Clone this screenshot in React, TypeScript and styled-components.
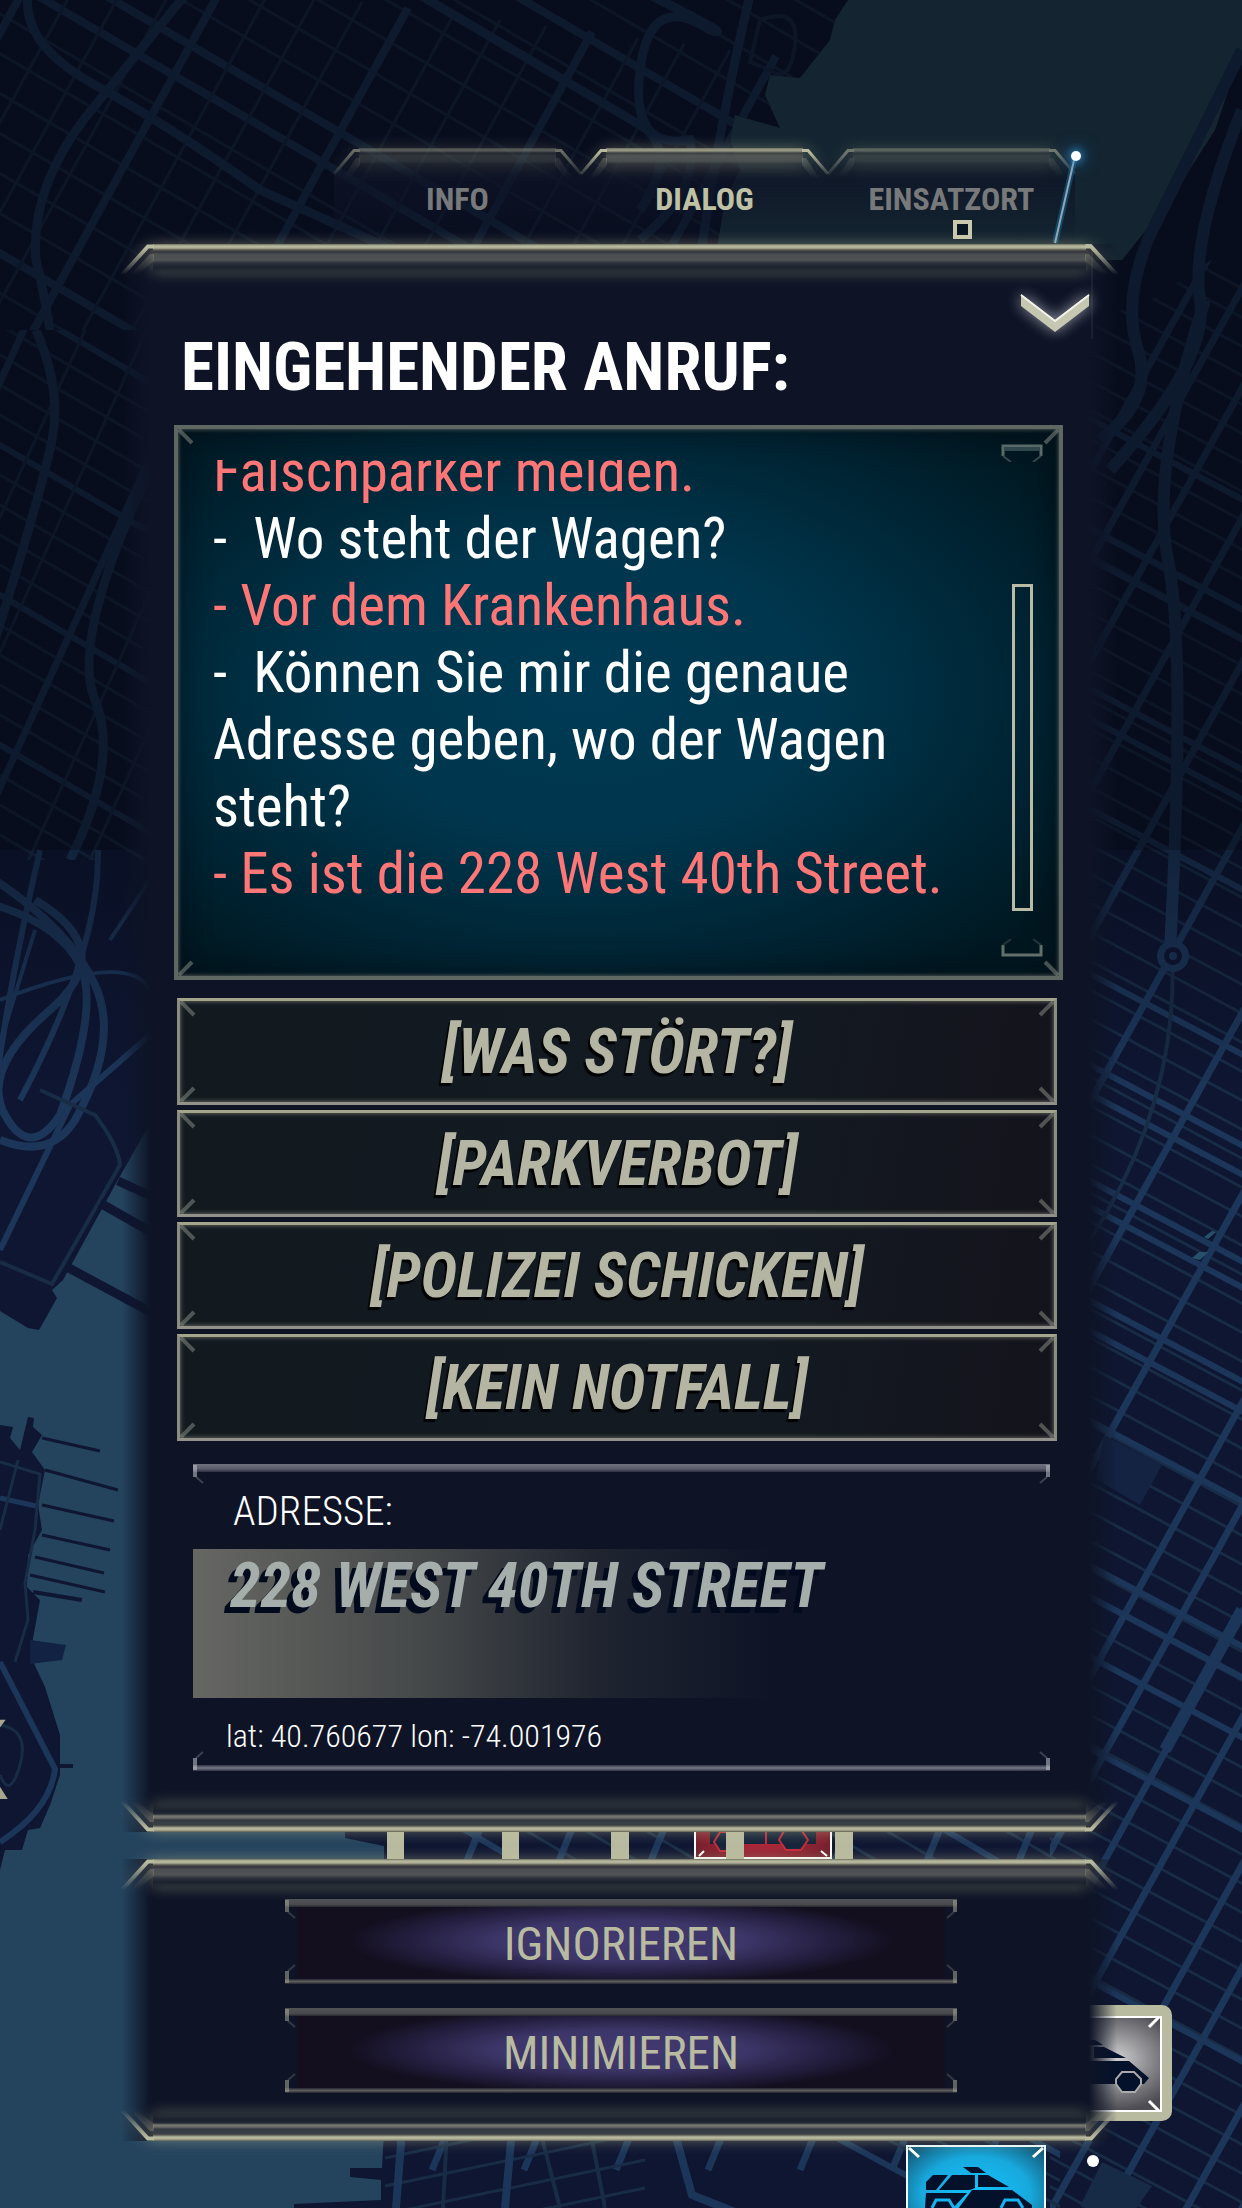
import React, { useId } from 'react';
import styled, { createGlobalStyle, css } from 'styled-components';

const ink = '#0e1426';
const cream = '#b9bba0';

const GlobalStyle = createGlobalStyle`
  *, *::before, *::after { box-sizing: border-box; }
  body {
    margin: 0;
    background: #070b1a;
    color: #fff;
    font-family: 'Roboto Condensed', Roboto, 'Liberation Sans', sans-serif;
  }
  h1, p { margin: 0; }
  button {
    font-family: inherit;
    border: 0;
    padding: 0;
    margin: 0;
    background: none;
    color: inherit;
    cursor: pointer;
  }
`;

/* ---------- City map behind the interface ---------- */

const Backdrop = styled.svg`
  position: absolute;
  inset: 0;
  width: 100%;
  height: 100%;
  z-index: -1;
`;

type Grid = { x: number; y: number; dx: number; dy: number; sx: number; sy: number; count: number; every: number };

const gridPaths = ({ x, y, dx, dy, sx, sy, count, every }: Grid) => {
  let minor = '';
  let major = '';
  for (let i = 0; i < count; i++) {
    const d = `M${x + sx * i} ${y + sy * i}l${dx} ${dy}`;
    if (every && i % every === 0) major += d;
    else minor += d;
  }
  return { minor, major };
};

function Streets({ grid, minorWidth = 3, majorWidth = 6 }: { grid: Grid; minorWidth?: number; majorWidth?: number }) {
  const { minor, major } = gridPaths(grid);
  return (
    <g fill="none">
      <path d={minor} stroke="#182c46" strokeWidth={minorWidth} />
      <path d={major} stroke="#1c3659" strokeWidth={majorWidth} />
    </g>
  );
}

/* Heights at which the eastern avenues and wide streets cross x = 1091. */
const avenues = [470, 560, 660, 790, 935, 1100, 1285, 1467, 1675, 1778, 1885, 1990, 2137, 2240, 2380, 2480];
const wideStreets = [420, 530, 560, 690, 720, 810, 975, 1066, 1095, 1182, 1208, 1302, 1332, 1422, 1567, 1598, 1658, 1750, 1982];
const avenuePath = avenues.map((y) => `M1041 ${y + 90}L1251 ${y - 288}`).join('');
const wideStreetPath = wideStreets.map((y) => `M1041 ${y - 27}L1251 ${y + 84}`).join('');

function CityMap() {
  return (
    <Backdrop viewBox="0 0 1242 2208" preserveAspectRatio="xMidYMin slice" aria-hidden="true">
      <defs>
        <linearGradient id="dusk" x1="0" y1="0" x2="0" y2="1">
          <stop offset="0" stopColor="#03060f" stopOpacity="0.58" />
          <stop offset="0.773" stopColor="#03060f" stopOpacity="0.58" />
          <stop offset="0.773" stopColor="#03060f" stopOpacity="0.4" />
          <stop offset="1" stopColor="#03060f" stopOpacity="0" />
        </linearGradient>
        <radialGradient id="pinGrey" cx="0.62" cy="0.45" r="0.55">
          <stop offset="0" stopColor="#d2d2d4" />
          <stop offset="1" stopColor="#4c4c52" />
        </radialGradient>
        <radialGradient id="pinBlue" cx="0.5" cy="0.5" r="0.65">
          <stop offset="0" stopColor="#12c2ff" />
          <stop offset="0.6" stopColor="#18a9dd" />
          <stop offset="1" stopColor="#135a78" />
        </radialGradient>
        <radialGradient id="pinRed" cx="0.5" cy="0.6" r="0.6">
          <stop offset="0" stopColor="#c42b3c" />
          <stop offset="1" stopColor="#6a1d2a" />
        </radialGradient>
        <clipPath id="east"><path d="M1060 330L1092 320L1150 300L1242 240V2208H1050V330z" /></clipPath>
        <clipPath id="southShore"><path d="M345 1820H1060V2208H294V2204L381 2200V2180L350 2177V2168L382 2168L384 2130V1846L345 1838z" /></clipPath>
        <clipPath id="north"><path d="M0 0H848L835 20L830 40L800 78L770 75L765 95L780 128L735 115L730 140L740 170L725 200L715 260H600V330H0z" /></clipPath>
        <clipPath id="west"><path d="M0 330H180V860H0z" /></clipPath>
      </defs>

      <rect width="1242" height="2208" fill="#0e1632" />
      <path d="M848 0L835 20L830 40L800 78L770 75L765 95L780 128L735 115L730 140L740 170L725 200L715 260H1122L1170 200L1215 130L1242 50V0z" fill="#2b5060" />

      <g clipPath="url(#north)">
        <Streets grid={{ x: -400, y: -300, dx: 1300, dy: 760, sx: 17, sy: -30, count: 24, every: 6 }} minorWidth={3} majorWidth={8} />
        <Streets grid={{ x: -417, y: -270, dx: 1300, dy: 760, sx: -17, sy: 30, count: 24, every: 7 }} minorWidth={3} majorWidth={8} />
        <Streets grid={{ x: 40, y: -40, dx: -330, dy: 600, sx: 46, sy: 6, count: 22, every: 4 }} minorWidth={3} majorWidth={8} />
        <g fill="none" stroke="#1c3659" strokeWidth="9">
          <path d="M28 -5Q22 45 95 85T260 190L420 262" />
          <path d="M185 -5L85 118Q30 190 36 260Q60 360 55 420" />
          <path d="M420 -5L640 125Q680 150 640 210" />
          <path d="M650 -5Q740 40 710 30Q650 -10 640 70T690 140Q700 190 640 240" />
          <path d="M750 -5Q720 120 700 260" />
        </g>
        <path d="M760 20Q800 5 795 45T770 70L750 62z" fill="none" stroke="#182c46" strokeWidth="4" />
      </g>

      <g clipPath="url(#west)">
        <Streets grid={{ x: -60, y: 260, dx: 300, dy: 175, sx: 0, sy: 30, count: 22, every: 5 }} />
        <Streets grid={{ x: 60, y: 250, dx: -300, dy: 660, sx: 46, sy: 34, count: 14, every: 3 }} majorWidth={7} />
        <path d="M36 330Q62 390 52 440T-5 640M150 470Q70 640 95 700T70 860" fill="none" stroke="#1c3659" strokeWidth="9" />
      </g>

      <g clipPath="url(#east)">
        <Streets grid={{ x: 1040, y: 180, dx: 220, dy: 118, sx: 0, sy: 29, count: 74, every: 0 }} />
        <path d={wideStreetPath} stroke="#1c3659" strokeWidth="6" />
        <path d={avenuePath} stroke="#1c3659" strokeWidth="7" />
        <path d="M1242 1610L1165 1750" stroke="#1c3659" strokeWidth="12" />
        <path d="M1205 300Q1150 470 1168 560T1170 950" fill="none" stroke="#1c3659" strokeWidth="12" />
        <path d="M1172 950Q1180 1100 1090 1240" fill="none" stroke="#182c46" strokeWidth="4" />
      </g>
      <path d="M1242 50L1150 235Q1122 300 1138 350T1100 440M1242 110Q1190 240 1200 300T1110 470" fill="none" stroke="#1c3659" strokeWidth="12" />
      <circle cx="1173" cy="956" r="16" fill="#1c3659" />
      <circle cx="1173" cy="956" r="9" fill="#0e1632" />
      <circle cx="1173" cy="956" r="4" fill="#1c3659" />
      <path d="M1192 1258l7-6h9l-8 8zM1204 1237l8-6 4 1-8 7z" fill="#28506a" />
      <path d="M1104 1435l58 30-22 40-44-26z" fill="#142342" />

      <g fill="none" stroke="#1c3659">
        <path d="M-5 905Q60 925 80 965T60 1115Q30 1160 5 1115T50 1010T35 900" strokeWidth="8" />
        <path d="M-5 880Q70 930 95 985T75 1120Q50 1160 0 1140" strokeWidth="8" />
        <path d="M40 850Q5 1000 -10 1130M150 1035L70 1105L0 1250M98 850Q100 950 20 1100" strokeWidth="6" />
        <path d="M0 1000Q130 950 150 990M35 930L-5 1060M150 880L110 940" strokeWidth="4" />
        <path d="M40 1090L95 1115Q118 1145 120 1165L52 1284L0 1262" stroke="#182c46" strokeWidth="4" />
      </g>

      <path d="M145 1132L115 1185L63 1280L52 1290L57 1298L39 1330L28 1328L0 1311V1425L13 1427L10 1438L20 1450L28 1417L34 1418L33 1427L42 1435L32 1452L45 1470L38 1505L42 1530L28 1555L27 1587L40 1600L30 1655L45 1687L60 1735V1775L50 1805L40 1828L28 1830L22 1850L5 1850L0 1870V2208H294V2204L381 2200V2180L350 2177V2168L382 2168L384 2130V1846L345 1838V1800L180 1700V1100z" fill="#24435d" />
      <g fill="none" stroke="#0e1632">
        <path d="M67 1267L160 1317M100 1203L160 1237M118 1181L160 1200" strokeWidth="9" />
        <path d="M42 1438L100 1451M45 1470L118 1490M42 1505L114 1521M42 1535L110 1550M35 1557L104 1573M30 1575L105 1592" strokeWidth="3" />
        <path d="M33 1592L82 1600M58 1766H73" strokeWidth="4" />
      </g>
      <path d="M30 1640L66 1645L62 1660L30 1664z" fill="#122242" />
      <g fill="none" stroke="#1c3659">
        <path d="M0 1662L55 1769Q50 1810 0 1842" strokeWidth="6" />
        <path d="M0 1498L36 1506" strokeWidth="5" />
        <path d="M0 1462L40 1474L35 1530L25 1583L28 1620L15 1662M18 1460L0 1530M0 1725Q30 1730 20 1765T0 1775" stroke="#182c46" strokeWidth="3" />
      </g>
      <text x="8" y="1799" textAnchor="end" fontSize="112" fill="#a5a68d">K</text>

      <g clipPath="url(#southShore)">
        <Streets grid={{ x: 380, y: 1780, dx: 340, dy: 200, sx: 60, sy: 0, count: 14, every: 4 }} />
        <Streets grid={{ x: 500, y: 1780, dx: -160, dy: 390, sx: 92, sy: 0, count: 12, every: 1 }} majorWidth={7} />
        <Streets grid={{ x: 385, y: 2158, dx: 260, dy: -54, sx: 0, sy: 28, count: 5, every: 0 }} />
        <Streets grid={{ x: 600, y: 2010, dx: 500, dy: 270, sx: 48, sy: 0, count: 12, every: 4 }} />
        <path d="M402 2130L396 2208M512 2130L505 2208M674 2130L692 2195L780 2230" fill="none" stroke="#1c3659" strokeWidth="8" />
        <path d="M447 2130L443 2208M540 2130L560 2208M590 2130L605 2208" fill="none" stroke="#182c46" strokeWidth="4" />
      </g>
      <path d="M1102 2162l50 24-28 40-44-20z" fill="#172a46" />

      <rect width="1242" height="1100" fill="url(#dusk)" />

      <g>
        <rect x="695" y="1806" width="136" height="52" fill="url(#pinRed)" stroke="#fff" strokeWidth="2" />
        <path d="M710 1830h106v14H710z" fill="#16243a" />
        <path d="M766 1830v14" stroke="#c42b3c" strokeWidth="2" />
        <path d="M720 1832h14l8 8-8 11h-14l-6-9zM784 1831h18l6 9-7 10h-15l-7-10z" fill="#16243a" stroke="#c42b3c" strokeWidth="2" />
        <path d="M699 1856l5-5M827 1856l-6-5" stroke="#fff" strokeWidth="2" />
        <g fill={cream}>
          <path d="M387 1826h17v40h-17zM502 1826h17v40h-17zM611 1826h18v40h-18zM726 1826h18v40h-18zM835 1826h18v40h-18z" />
        </g>
      </g>

      <g>
        <rect x="1030" y="2005" width="142" height="116" rx="10" fill={cream} />
        <rect x="1040" y="2017" width="121" height="94" fill="url(#pinGrey)" stroke="#fff" strokeWidth="2" />
        <path d="M1149 2027l10-10M1149 2101l10 10" stroke="#fff" strokeWidth="3" />
        <path d="M1060 2040H1095l8 5H1060zM1094 2047h10l22 11h-32zM1050 2061H1129l20 17-5 6H1050z" fill="#04112a" />
        <path d="M1122 2072h12l7 7v5l-6 8h-13l-6-8v-5z" fill="#04112a" stroke="#aaa" strokeWidth="2" />
      </g>

      <g>
        <rect x="907" y="2146" width="138" height="96" fill="url(#pinBlue)" stroke="#eefaff" strokeWidth="2" />
        <path d="M909 2148l10 9M1043 2148l-10 9" stroke="#fff" strokeWidth="3" />
        <g fill="#04112a">
          <path d="M963 2167h15l8 6H971z" />
          <path d="M933 2175h15l-12 15h-10v-8zM952 2175h23v13l-5 2h-31zM978 2175h10l21 12h-31z" />
          <path d="M926 2193h41l-14 15h-28zM972 2190h40l20 15v8h-77z" />
        </g>
        <path d="M932 2208l4-8h13l5 8M1001 2208l4-8h13l5 8" fill="#04112a" stroke="#14b4ef" strokeWidth="3" />
      </g>
      <circle cx="1093" cy="2161" r="6" fill="#fff" />
    </Backdrop>
  );
}

/* ---------- Frame parts ---------- */

type EdgeKind = 'top' | 'bottom' | 'tab';

const EdgeRow = styled.div<{ $bottom?: boolean; $dim?: boolean }>`
  display: flex;
  height: ${(p) => (p.$bottom ? 35 : 40)}px;
  opacity: ${(p) => (p.$dim ? 0.55 : 1)};
  filter: drop-shadow(0 0 7px rgba(196, 192, 150, 0.45));
`;

const EdgeLine = styled.div<{ $kind: EdgeKind }>`
  flex: 1;
  margin: 0 -1px;
  background: ${({ $kind }) =>
    $kind === 'bottom'
      ? `linear-gradient(to bottom, transparent 0 2px, #1a212d 14px, #242b34 17px, #777870 19px, #6b6c66 21px, #343a41 23px, #3a4146 28px, #5c5d55 29px, ${cream} 31px, #aeae96 33px, #5c5d55 35px)`
      : $kind === 'tab'
        ? 'linear-gradient(to bottom, rgba(150,150,125,.6) 0, #9d9f89 2px, #8f917e 3px, rgba(60,64,66,.7) 5px, rgba(84,88,86,.9) 8px, rgba(76,82,82,.9) 13px, rgba(40,44,56,.4) 16px, transparent 26px)'
        : `linear-gradient(to bottom, #6c6c5e 0, ${cream} 2px, #aeae96 4px, #55564f 6px, #30333a 8px, #4a4e51 10px, #4f5354 16px, #2c313c 19px, #1c222e 23px, transparent 32px)`};
`;

const CornerSvg = styled.svg<{ $flip: boolean; $upside: boolean }>`
  flex: none;
  display: block;
  overflow: visible;
  transform: scale(${(p) => (p.$flip ? -1 : 1)}, ${(p) => (p.$upside ? -1 : 1)});
`;

function Corner({ kind, flip = false }: { kind: EdgeKind; flip?: boolean }) {
  const id = useId();
  const width = kind === 'tab' ? 26 : 32;
  const height = kind === 'bottom' ? 35 : 40;
  const inset = kind === 'tab' ? 20 : 26;
  return (
    <CornerSvg $flip={flip} $upside={kind === 'bottom'} width={width} height={height} aria-hidden="true">
      <defs>
        <linearGradient id={id} gradientUnits="userSpaceOnUse" x1="0" y1="4" x2="0" y2="31">
          <stop offset="0" stopColor="#b9bba0" />
          <stop offset="1" stopColor="#b9bba0" stopOpacity="0" />
        </linearGradient>
      </defs>
      <path
        d={`M${width} 2.5H${inset}L0 ${kind === 'tab' ? 26 : 31}`}
        fill="none"
        stroke={`url(#${id})`}
        strokeWidth={kind === 'tab' ? 3 : 4}
      />
      <path d={`M${width} 10H${inset + 2}L9 30L15 31L${width} 17z`} fill={`url(#${id})`} opacity="0.35" />
    </CornerSvg>
  );
}

function Edge({ kind, dim }: { kind: EdgeKind; dim?: boolean }) {
  return (
    <EdgeRow $bottom={kind === 'bottom'} $dim={dim} aria-hidden="true">
      <Corner kind={kind} />
      <EdgeLine $kind={kind} />
      <Corner kind={kind} flip />
    </EdgeRow>
  );
}

type Spot = 'tl' | 'tr' | 'bl' | 'br';
const spots: Spot[] = ['tl', 'tr', 'bl', 'br'];

const CornerMark = styled.svg<{ $spot: Spot }>`
  position: absolute;
  pointer-events: none;
  ${(p) => (p.$spot[0] === 't' ? 'top: 0;' : 'bottom: 0;')}
  ${(p) => (p.$spot[1] === 'l' ? 'left: 0;' : 'right: 0;')}
  transform: scale(${(p) => (p.$spot[1] === 'l' ? 1 : -1)}, ${(p) => (p.$spot[0] === 't' ? 1 : -1)});
`;

function Ticks() {
  return (
    <>
      {spots.map((s) => (
        <CornerMark key={s} $spot={s} width="22" height="22" aria-hidden="true">
          <path d="M1 1L14 14" stroke="#8d9389" strokeWidth="4" opacity="0.5" />
        </CornerMark>
      ))}
    </>
  );
}

function Hooks({ tone = '#a3a596' }: { tone?: string }) {
  return (
    <>
      {spots.map((s) => (
        <CornerMark key={s} $spot={s} width="16" height="22" aria-hidden="true">
          <path d="M2 1V13" stroke={tone} strokeWidth="4" opacity="0.55" />
          <path d="M3 13L10 19" stroke={tone} strokeWidth="2" opacity="0.25" />
        </CornerMark>
      ))}
    </>
  );
}

/* ---------- Layout ---------- */

const Screen = styled.main`
  position: relative;
  z-index: 0;
  display: flex;
  flex-direction: column;
  min-height: 100vh;
  padding: 148px 125px 66px 122px;
  overflow: hidden;
`;

const TabBar = styled.nav`
  position: relative;
  display: grid;
  grid-template-columns: repeat(3, 1fr);
  margin: 0 42px 0 212px;
`;

const Tab = styled.button<{ $active?: boolean }>`
  display: flex;
  flex-direction: column;
  justify-content: flex-start;
  align-items: stretch;
  height: 96px;
  color: ${(p) => (p.$active ? '#bfc1a5' : '#77797a')};
  font-size: 32px;
  line-height: 38px;
  font-weight: 700;
  background: linear-gradient(to bottom, transparent 8px, rgba(14, 20, 38, 0.75) 30px, rgba(14, 20, 38, 0.1) 90px);
  span { display: block; margin-top: -8px; }
`;

const Antenna = styled.svg`
  position: absolute;
  right: -36px;
  bottom: -96px;
  overflow: visible;
  pointer-events: none;
`;

const Beacon = styled.circle`
  filter: drop-shadow(0 0 5px #3ba7f0) drop-shadow(0 0 8px #1d6fb0);
`;

const Panel = styled.section`
  background: linear-gradient(to right, transparent, ${ink} 28px, ${ink} calc(100% - 28px), transparent);
  & + & { margin-top: 27px; }
`;

const PanelHeader = styled.header`
  display: flex;
  justify-content: space-between;
  align-items: flex-start;
  padding: 10px 28px 19px 59px;
`;

const Title = styled.h1`
  margin-top: 34px;
  font-size: 67px;
  line-height: 78px;
  font-weight: 700;
`;

const CollapseButton = styled.button`
  display: block;
  svg { display: block; overflow: visible; filter: drop-shadow(0 0 7px rgba(220, 220, 230, 0.7)); }
`;

const PanelBody = styled.div`
  padding: 0 54px 26px 52px;
`;

const Call = styled.div`
  position: relative;
  display: flex;
  justify-content: space-between;
  border: 4px solid #5f6763;
  background: radial-gradient(ellipse 68% 66% at 46% 48%, #003a54 0%, #00364d 40%, #002433 75%, #001720 100%);
  box-shadow: inset 0 0 4px #6c716c, inset 0 0 30px rgba(0, 10, 16, 0.6);
`;

const Transcript = styled.div`
  display: flex;
  flex: 1;
  flex-direction: column;
  justify-content: flex-end;
  height: 447px;
  margin: 31px 24px 69px 35px;
  overflow: hidden;
  font-size: 57px;
  line-height: 67px;
  white-space: pre-wrap;
`;

const Line = styled.p<{ $caller?: boolean }>`
  flex: none;
  color: ${(p) => (p.$caller ? '#ff7676' : '#fff')};
`;

const Scroller = styled.div`
  display: flex;
  flex-direction: column;
  align-items: center;
  width: 42px;
  margin: 15px 16px 19px 0;
  svg { display: block; }
`;

const ScrollTrack = styled.div`
  flex: 1;
  display: flex;
  padding: 122px 0 28px;
`;

const ScrollThumb = styled.div`
  width: 21px;
  border: 3px solid #b9bba4;
`;

const Choices = styled.div`
  display: grid;
  gap: 5px;
  margin: 18px 6px 0 3px;
`;

const Choice = styled.button`
  position: relative;
  height: 107px;
  border: 3px solid;
  border-color: #a3a48c #8b8d80 #92928a #8b8d80;
  background: linear-gradient(100deg, #121a20, #131a22 65%, #14131c);
  box-shadow: inset 0 0 5px #77796c;
  color: #b4b6a3;
  font-size: 62px;
  line-height: 72px;
  font-weight: 700;
  font-style: italic;
  text-shadow: -2px 3px 1px #000;
`;

const hooked = css`
  position: relative;
  &::before, &::after { content: ''; display: block; }
`;

const Address = styled.section`
  ${hooked}
  margin: 23px 13px 0 19px;
  &::before { height: 8px; background: linear-gradient(to bottom, #6f717e, #5b5d6b 60%, #2c3040); }
  &::after { height: 6px; background: linear-gradient(to bottom, #2c3040, #777986 50%, #2c3040); }
`;

const AddressLabel = styled.p`
  padding: 14px 0 13px 40px;
  font-size: 41px;
  line-height: 50px;
  font-weight: 300;
`;

const Street = styled.p`
  height: 149px;
  padding-left: 37px;
  background: linear-gradient(to right, #666763, #454849 40%, #1f2430 70%, transparent) left / 580px 100% no-repeat;
  color: #a5aeaa;
  font-size: 62px;
  line-height: 74px;
  font-weight: 700;
  font-style: italic;
  text-shadow: -6px 6px 0 #020a1e;
`;

const Coordinates = styled.p`
  padding: 19px 0 10px 33px;
  font-size: 32px;
  line-height: 38px;
  font-weight: 300;
`;

const Actions = styled.div`
  display: grid;
  gap: 24px;
  padding: 0 160px 13px 163px;
`;

const Action = styled.button`
  ${hooked}
  display: flex;
  flex-direction: column;
  height: 85px;
  color: ${cream};
  font-size: 47px;
  font-weight: 400;
  &::before { height: 8px; width: 100%; background: linear-gradient(to bottom, #505255, #47494d 70%, #26252f); }
  &::after { height: 5px; width: 100%; background: linear-gradient(to bottom, #26252f, #5c5e5f 50%, #26252f); }
  span {
    display: grid;
    place-items: center;
    flex: 1;
    align-self: stretch;
    margin: 0 12px;
    background: radial-gradient(ellipse 42% 60% at 50% 47%, #413970 0%, #3d3669 45%, #231e3e 78%, #130f1f 100%);
  }
`;

const tabs = ['INFO', 'DIALOG', 'EINSATZORT'];

const choices = ['[WAS STÖRT?]', '[PARKVERBOT]', '[POLIZEI SCHICKEN]', '[KEIN NOTFALL]'];

const transcript = [
  { caller: true, text: 'Falschparker melden.' },
  { caller: false, text: '-  Wo steht der Wagen?' },
  { caller: true, text: '- Vor dem Krankenhaus.' },
  { caller: false, text: '-  Können Sie mir die genaue Adresse geben, wo der Wagen steht?' },
  { caller: true, text: '- Es ist die 228 West 40th Street.' },
];

export default function App() {
  return (
    <>
      <GlobalStyle />
      <Screen>
        <CityMap />
        <TabBar>
          {tabs.map((name) => (
            <Tab key={name} $active={name === 'DIALOG'} aria-pressed={name === 'DIALOG'}>
              <Edge kind="tab" dim={name !== 'DIALOG'} />
              <span>{name}</span>
            </Tab>
          ))}
          <Antenna width="158" height="192" aria-hidden="true">
            <path d="M122 8L102 95" stroke="#12618e" strokeWidth="6" opacity="0.6" />
            <path d="M122 8L102 95" stroke="#93a7b0" strokeWidth="2" />
            <Beacon cx="123" cy="8" r="5" fill="#fff" />
            <rect x="2" y="74" width="15" height="15" fill="#0a1524" stroke="#c9c9ae" strokeWidth="4" />
            <path d="M0 98H139" stroke="#a9a997" strokeWidth="4" />
            <path d="M139 96V191" stroke="#2b2f3c" strokeWidth="1" />
          </Antenna>
        </TabBar>

        <Panel>
          <Edge kind="top" />
          <PanelHeader>
            <Title>EINGEHENDER ANRUF:</Title>
            <CollapseButton aria-label="Einklappen">
              <svg width="68" height="38" aria-hidden="true">
                <path d="M0 0L34 26L68 0V12L34 38L0 12z" fill="#c5c7b0" />
                <path d="M0 1L34 27L68 1" fill="none" stroke="#f3f3ec" strokeWidth="2" />
              </svg>
            </CollapseButton>
          </PanelHeader>
          <PanelBody>
            <Call>
              <Transcript>
                {transcript.map((line) => (
                  <Line key={line.text} $caller={line.caller}>{line.text}</Line>
                ))}
              </Transcript>
              <Scroller aria-hidden="true">
                <svg width="42" height="18">
                  <path d="M2 12V2H40V12" fill="none" stroke="#6f7f7a" strokeWidth="3" opacity="0.8" />
                  <path d="M3 5H39" stroke="#2f484e" strokeWidth="4" />
                  <path d="M2 12L10 18M40 12L32 18" stroke="#34484c" strokeWidth="2" />
                </svg>
                <ScrollTrack><ScrollThumb /></ScrollTrack>
                <svg width="42" height="18">
                  <path d="M2 6V16H40V6" fill="none" stroke="#62706c" strokeWidth="3" />
                  <path d="M2 6L10 0M40 6L32 0" stroke="#23363a" strokeWidth="2" />
                </svg>
              </Scroller>
              <Ticks />
            </Call>

            <Choices>
              {choices.map((label) => (
                <Choice key={label}>{label}<Ticks /></Choice>
              ))}
            </Choices>

            <Address>
              <AddressLabel>ADRESSE:</AddressLabel>
              <Street>228 WEST 40TH STREET</Street>
              <Coordinates>lat: 40.760677 lon: -74.001976</Coordinates>
              <Hooks tone="#c3c4d0" />
            </Address>
          </PanelBody>
          <Edge kind="bottom" />
        </Panel>

        <Panel>
          <Edge kind="top" />
          <Actions>
            <Action><span>IGNORIEREN</span><Hooks /></Action>
            <Action><span>MINIMIEREN</span><Hooks /></Action>
          </Actions>
          <Edge kind="bottom" />
        </Panel>
      </Screen>
    </>
  );
}
